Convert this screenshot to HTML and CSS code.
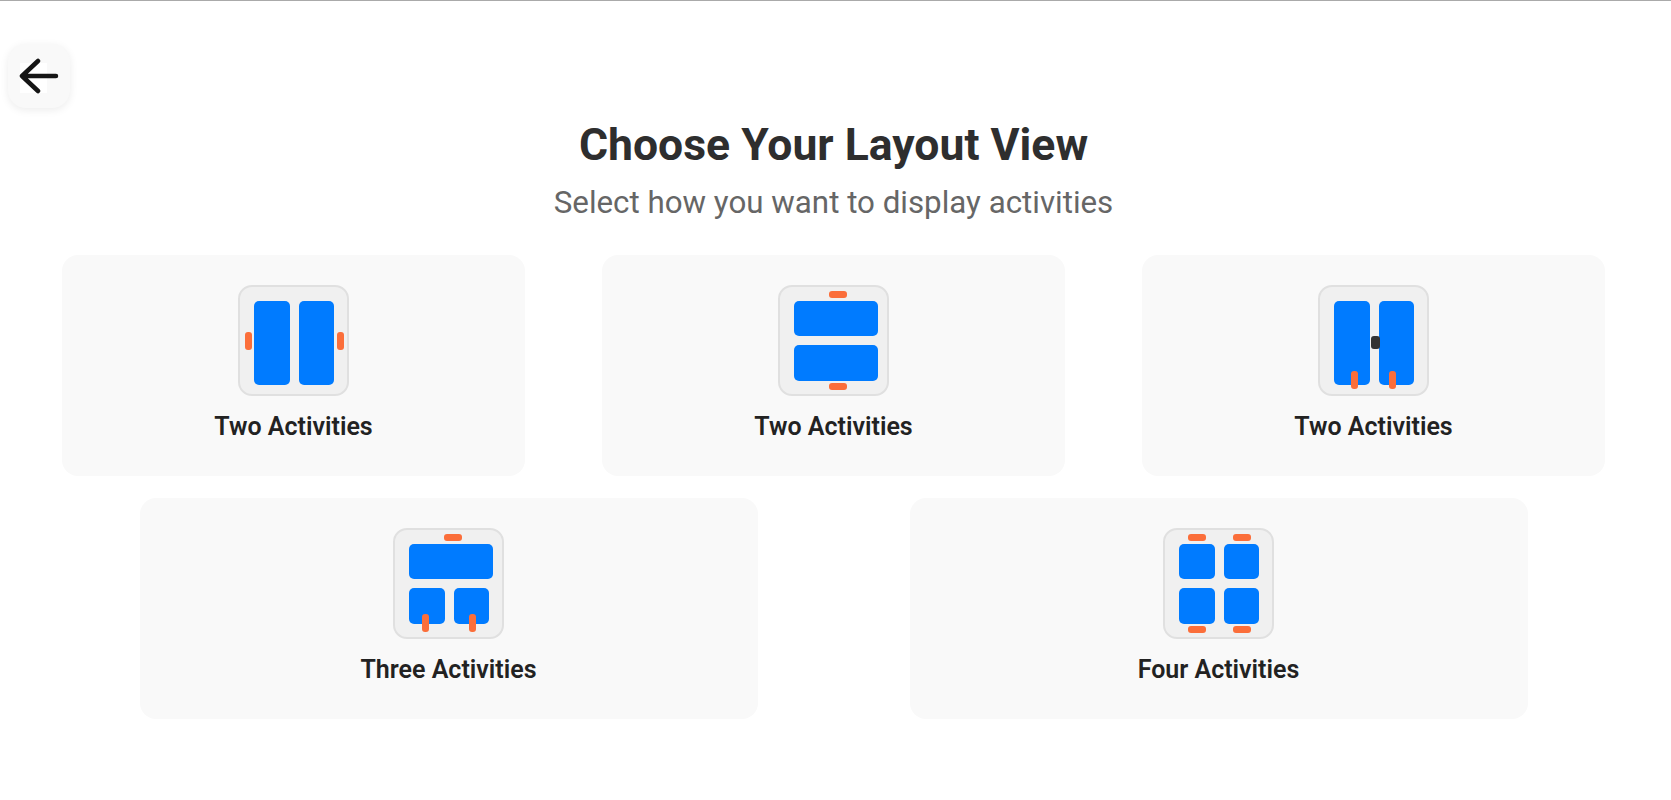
FILE: index.html
```html
<!DOCTYPE html>
<html lang="en">
<head>
    <meta charset="UTF-8">
    <meta name="viewport" content="width=device-width, initial-scale=1.0">
    <title>Choose Your Layout View</title>
    <link rel="stylesheet" href="styles.css">
</head>
<body>
    <div class="top-line"></div>

    <button class="back-button" aria-label="Back">
        <svg width="40" height="36" viewBox="0 0 40 36">
            <rect x="1" y="5" width="27" height="30" fill="#fff"/>
            <path d="M3 18H37M19 3L3 18L19 33" fill="none" stroke="#151515" stroke-width="4.5" stroke-linecap="round" stroke-linejoin="round"/>
        </svg>
    </button>

    <header>
        <h1>Choose Your Layout View</h1>
        <p>Select how you want to display activities</p>
    </header>

    <div class="row row-three">
        <div class="card">
            <div class="icon">
                <div class="panels">
                    <div class="panel tall"></div>
                    <div class="panel tall"></div>
                </div>
                <span class="handle side h-left"></span>
                <span class="handle side h-right"></span>
            </div>
            <div class="label">Two Activities</div>
        </div>
        <div class="card">
            <div class="icon">
                <div class="panels">
                    <div class="panel wide"></div>
                    <div class="panel wide"></div>
                </div>
                <span class="handle flat h-top-mid"></span>
                <span class="handle flat h-bottom-mid"></span>
            </div>
            <div class="label">Two Activities</div>
        </div>
        <div class="card">
            <div class="icon">
                <div class="panels">
                    <div class="panel tall"></div>
                    <div class="panel tall"></div>
                </div>
                <span class="handle dark"></span>
                <span class="handle side h-low-1"></span>
                <span class="handle side h-low-2"></span>
            </div>
            <div class="label">Two Activities</div>
        </div>
    </div>

    <div class="row row-two">
        <div class="card">
            <div class="icon">
                <div class="panels">
                    <div class="panel wide"></div>
                    <div class="panel"></div>
                    <div class="panel"></div>
                </div>
                <span class="handle flat h-top-mid"></span>
                <span class="handle side h-low-3"></span>
                <span class="handle side h-low-4"></span>
            </div>
            <div class="label">Three Activities</div>
        </div>
        <div class="card">
            <div class="icon">
                <div class="panels">
                    <div class="panel"></div>
                    <div class="panel"></div>
                    <div class="panel"></div>
                    <div class="panel"></div>
                </div>
                <span class="handle flat h-top-1"></span>
                <span class="handle flat h-top-2"></span>
                <span class="handle flat h-bottom-1"></span>
                <span class="handle flat h-bottom-2"></span>
            </div>
            <div class="label">Four Activities</div>
        </div>
    </div>
</body>
</html>
```

FILE: styles.css
```css
body {
    font-family: Roboto, sans-serif;
    margin: 0;
    padding-right: 4px;
    background-color: #fff;
    color: #222;
}
.top-line {
    height: 1px;
    margin-right: -4px;
    background-color: #aaa;
}
.back-button {
    display: flex;
    align-items: center;
    justify-content: center;
    width: 62px;
    height: 64px;
    margin: 43px 0 0 8px;
    padding: 0;
    border: none;
    border-radius: 18px;
    background-color: #f9f9f9;
    box-shadow: 0 2px 8px rgba(0,0,0,0.08);
}
header {
    text-align: center;
    margin-top: 11px;
    margin-bottom: 34px;
}
h1 {
    margin: 0;
    font-size: 44.5px;
    font-weight: 700;
    line-height: 52px;
    color: #2e2e2e;
}
header p {
    margin: 14px 0 0;
    font-size: 31.3px;
    line-height: 36px;
    color: #666;
}
.row {
    display: flex;
    justify-content: center;
    margin-bottom: 22px;
}
.row-three {
    gap: 76.5px;
}
.row-two {
    gap: 152px;
}
.row-three .card {
    width: 463.5px;
}
.row-two .card {
    width: 618px;
}
.card {
    display: flex;
    flex-direction: column;
    align-items: center;
    height: 221px;
    padding-top: 30px;
    box-sizing: border-box;
    border-radius: 16px;
    background-color: #f9f9f9;
}
.icon {
    position: relative;
    width: 111px;
    height: 111px;
    padding: 13.5px 14px;
    box-sizing: border-box;
    border: 2px solid #e0e0e0;
    border-radius: 14px;
    background-color: #f0f0f0;
}
.panels {
    display: grid;
    grid-template-columns: 35.5px 35.5px;
    grid-template-rows: 35.5px 35.5px;
    gap: 9px;
}
.panel {
    border-radius: 5px;
    background-color: #007bff;
}
.panel.wide {
    grid-column: 1 / 3;
    width: 84px;
}
.panel.tall {
    grid-row: 1 / 3;
    height: 84px;
}
.handle {
    position: absolute;
    border-radius: 3px;
    background-color: #fb6e3a;
}
.handle.side {
    width: 7px;
    height: 18px;
}
.handle.flat {
    width: 18px;
    height: 7px;
}
.handle.dark {
    left: 51px;
    top: 49px;
    width: 9px;
    height: 13px;
    background-color: #333;
}
.h-left { left: 5px; top: 45px; }
.h-right { left: 97px; top: 45px; }
.h-top-mid { left: 49px; top: 4px; }
.h-bottom-mid { left: 49px; top: 95.5px; }
.h-low-1 { left: 30.5px; top: 84px; }
.h-low-2 { left: 68.5px; top: 84px; }
.h-low-3 { left: 27px; top: 84px; }
.h-low-4 { left: 73.5px; top: 84px; }
.h-top-1 { left: 23px; top: 4px; }
.h-top-2 { left: 67.5px; top: 4px; }
.h-bottom-1 { left: 23px; top: 95.5px; }
.h-bottom-2 { left: 67.5px; top: 95.5px; }
.label {
    margin-top: 16px;
    font-size: 25px;
    font-weight: 600;
    line-height: 30px;
    color: #222;
}
```
